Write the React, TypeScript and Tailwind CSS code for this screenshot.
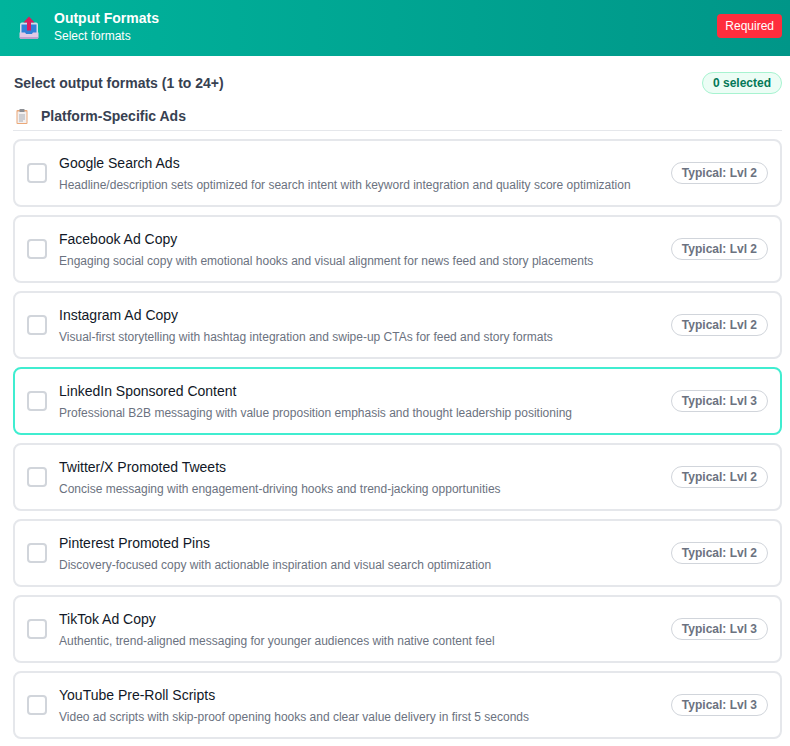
const items = [
  ["Google Search Ads", "Headline/description sets optimized for search intent with keyword integration and quality score optimization", "Typical: Lvl 2"],
  ["Facebook Ad Copy", "Engaging social copy with emotional hooks and visual alignment for news feed and story placements", "Typical: Lvl 2"],
  ["Instagram Ad Copy", "Visual-first storytelling with hashtag integration and swipe-up CTAs for feed and story formats", "Typical: Lvl 2"],
  ["LinkedIn Sponsored Content", "Professional B2B messaging with value proposition emphasis and thought leadership positioning", "Typical: Lvl 3"],
  ["Twitter/X Promoted Tweets", "Concise messaging with engagement-driving hooks and trend-jacking opportunities", "Typical: Lvl 2"],
  ["Pinterest Promoted Pins", "Discovery-focused copy with actionable inspiration and visual search optimization", "Typical: Lvl 2"],
  ["TikTok Ad Copy", "Authentic, trend-aligned messaging for younger audiences with native content feel", "Typical: Lvl 3"],
  ["YouTube Pre-Roll Scripts", "Video ad scripts with skip-proof opening hooks and clear value delivery in first 5 seconds", "Typical: Lvl 3"],
];

function OutboxIcon() {
  return (
    <svg width="22" height="24" viewBox="0 0 22 24" className="block">
      <path d="M2 8.5 Q2 6.5 4 6.5 H18 Q20 6.5 20 8.5 V20 H2 Z" fill="#d5dde8" />
      <rect x="3.5" y="8.5" width="15" height="9.5" fill="#2f80d8" />
      <path d="M1.5 16.5 H7 L8.5 18.5 H13.5 L15 16.5 H20.5 V21 Q20.5 23 18.5 23 H3.5 Q1.5 23 1.5 21 Z" fill="#e3c9e6" />
      <path d="M1.5 21 H20.5 Q20.5 23 18.5 23 H3.5 Q1.5 23 1.5 21 Z" fill="#bfa2cf" />
      <path d="M11 0.5 L16.5 6.5 H13 V14.5 H9 V6.5 H5.5 Z" fill="#dc1a5e" />
    </svg>
  );
}

function ClipboardIcon() {
  return (
    <svg width="12" height="15" viewBox="0 0 12 15" className="block">
      <rect x="0.5" y="1" width="11" height="14" rx="1" fill="#eba878" />
      <rect x="1.5" y="2.5" width="9" height="11.5" fill="#f3f0f0" />
      <rect x="3.5" y="0" width="5" height="3" rx="0.5" fill="#8d8f94" />
      <path d="M3 6 H9 M3 8 H9 M3 10 H9 M3 12 H7" stroke="#a9adb5" strokeWidth="1" />
    </svg>
  );
}

export default function App() {
  return (
    <div className="w-[790px] h-[746px] overflow-hidden bg-white font-['Liberation_Sans',Arial,sans-serif]">
      <header className="h-14 flex items-center justify-between pl-[18px] pr-2 bg-gradient-to-r from-[#00b49c] to-[#009688]">
        <div className="flex items-center gap-[14px]">
          <OutboxIcon />
          <div className="-mt-[4px]">
            <div className="text-[14px] leading-[18px] font-bold text-white">Output Formats</div>
            <div className="text-[12px] leading-[16px] mt-[1px] text-white">Select formats</div>
          </div>
        </div>
        <span className="h-6 px-2 -mt-[4px] flex items-center rounded bg-[#ff2d3d] text-white text-[12px]">Required</span>
      </header>
      <main className="pl-[13px] pr-2 pt-4">
        <div className="flex items-center justify-between pl-px h-[22px]">
          <h2 className="text-[14px] font-bold text-[#374151]">Select output formats (1 to 24+)</h2>
          <span className="h-[22px] px-[10px] flex items-center rounded-full border border-[#a7f3d0] bg-[#ecfdf5] text-[#047857] text-[12px] font-bold">0 selected</span>
        </div>
        <div className="mt-[10px] h-[27px] flex items-center gap-[13px] pl-[3px] pb-[2px] border-b border-[#e5e7eb]">
          <ClipboardIcon />
          <h3 className="text-[14px] font-bold text-[#374151]">Platform-Specific Ads</h3>
        </div>
        <div className="mt-2 flex flex-col gap-2">
          {items.map(([title, desc, level], i) => (
            <div key={title} className={`h-[68px] flex items-center justify-between pl-3 pr-3 rounded-lg border-2 bg-white ${i === 3 ? "border-[#40edd0]" : "border-[#e5e7eb]"}`}>
              <div className="flex items-center gap-3">
                <span className="w-5 h-5 rounded border-2 border-[#d1d5db] bg-white" />
                <div>
                  <div className="text-[14px] leading-[18px] text-[#111827]">{title}</div>
                  <div className="text-[12px] leading-[16px] mt-[5px] text-[#6b7280]">{desc}</div>
                </div>
              </div>
              <span className="h-[22px] px-[10px] flex items-center rounded-full border border-[#d1d5db] text-[#6b7280] text-[12px] font-bold">{level}</span>
            </div>
          ))}
        </div>
      </main>
    </div>
  );
}
